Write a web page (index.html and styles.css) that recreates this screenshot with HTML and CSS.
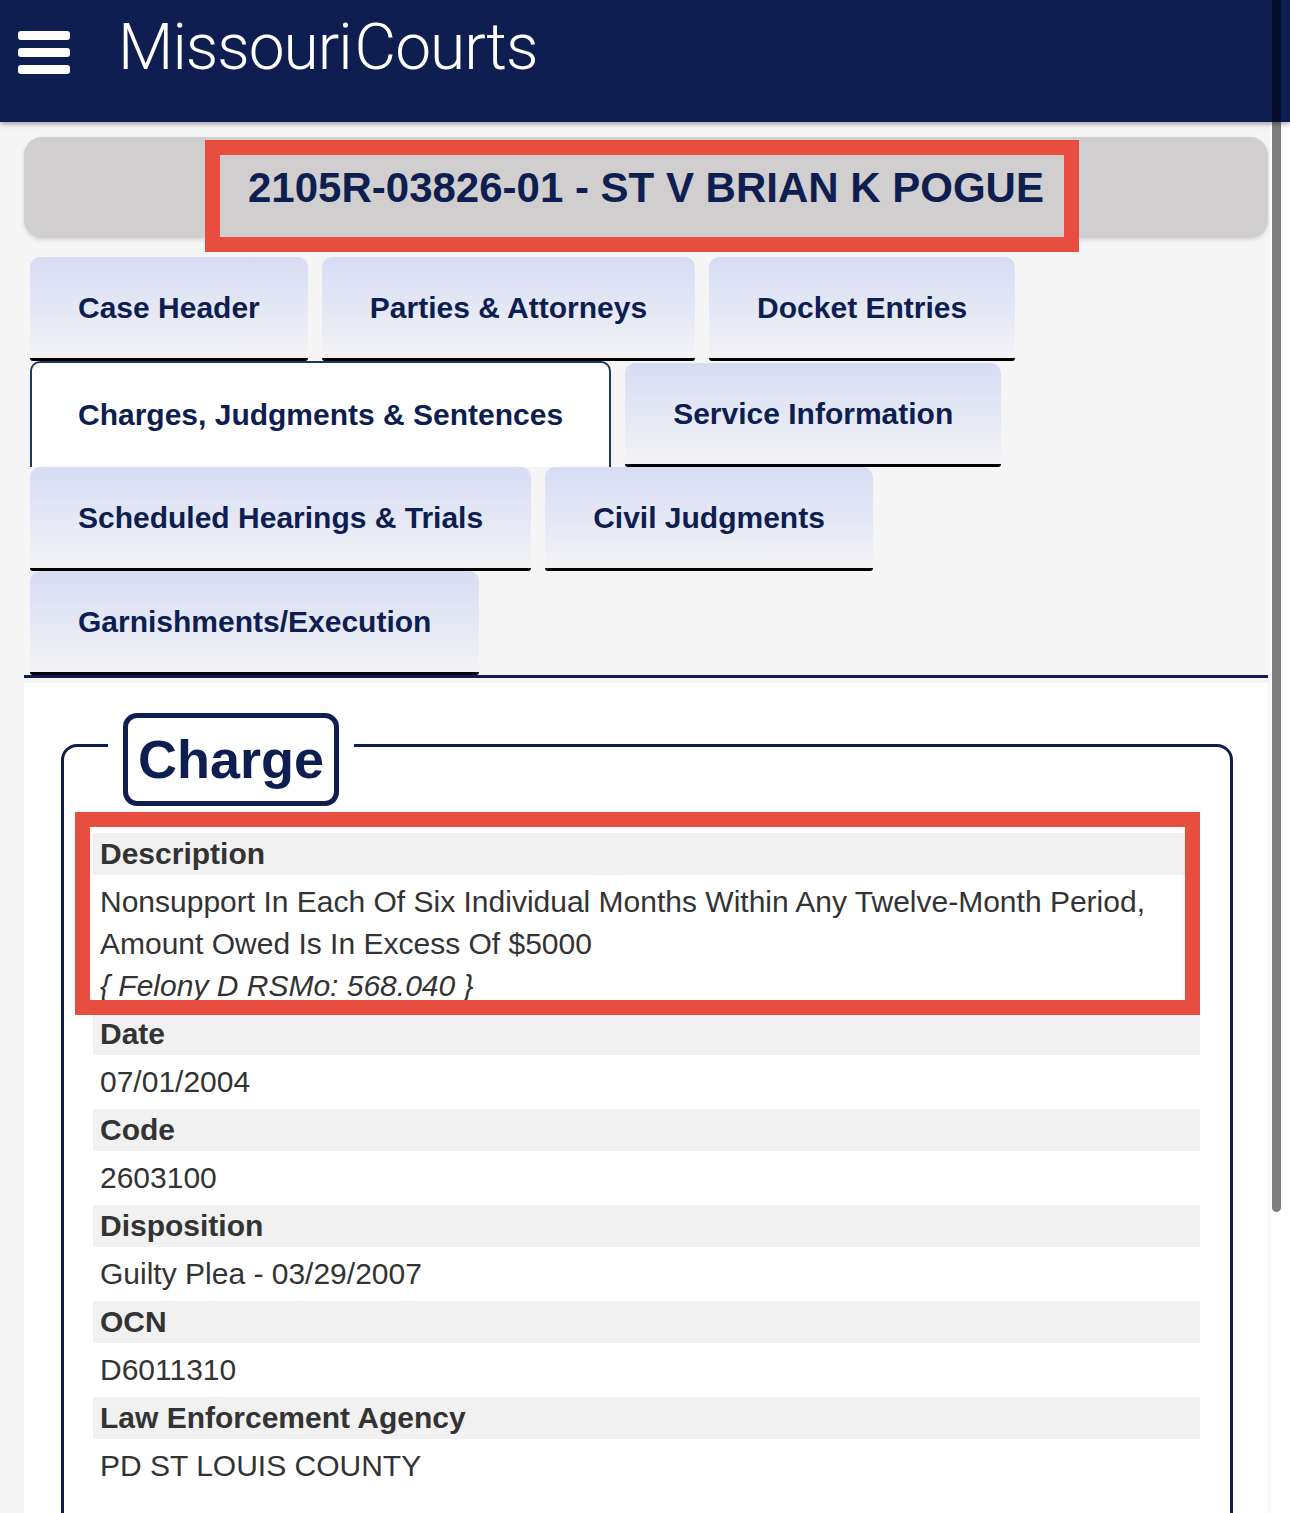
FILE: index.html
```html
<!DOCTYPE html>
<html lang="en">
<head>
  <meta charset="UTF-8" />
  <meta name="viewport" content="width=device-width, initial-scale=1" />
  <title>Case.net - Charges, Judgments &amp; Sentences</title>
  <link rel="stylesheet" href="styles.css">
</head>
<body>
  <header class="topbar">
    <svg class="menu-icon" width="52" height="43" viewBox="0 0 52 43" aria-hidden="true">
      <rect x="0" y="0" width="52" height="9" rx="3" fill="#fff" />
      <rect x="0" y="17" width="52" height="9" rx="3" fill="#fff" />
      <rect x="0" y="34" width="52" height="9" rx="3" fill="#fff" />
    </svg>
    <div class="brand">Missouri<span class="brand-gap"></span>Courts</div>
  </header>

  <div class="page">
    <div class="case-title">
      <h1>2105R-03826-01 - ST V BRIAN K POGUE</h1>
      <div class="mark mark-title"></div>
    </div>

    <nav class="tabs">
      <a class="tab" href="#">Case Header</a>
      <a class="tab" href="#">Parties &amp; Attorneys</a>
      <a class="tab" href="#">Docket Entries</a>
      <a class="tab active" href="#">Charges, Judgments &amp; Sentences</a>
      <a class="tab" href="#">Service Information</a>
      <a class="tab" href="#">Scheduled Hearings &amp; Trials</a>
      <a class="tab" href="#">Civil Judgments</a>
      <a class="tab" href="#">Garnishments/Execution</a>
    </nav>

    <div class="panel">
      <fieldset class="charge">
        <legend><span>Charge</span></legend>
        <dl class="rows">
          <div class="mark mark-desc"></div>
          <dt>Description</dt>
          <dd>Nonsupport In Each Of Six Individual Months Within Any Twelve-Month Period, Amount Owed Is In Excess Of $5000<br><em>{ Felony D RSMo: 568.040 }</em></dd>
          <dt>Date</dt>
          <dd>07/01/2004</dd>
          <dt>Code</dt>
          <dd>2603100</dd>
          <dt>Disposition</dt>
          <dd>Guilty Plea - 03/29/2007</dd>
          <dt>OCN</dt>
          <dd>D6011310</dd>
          <dt>Law Enforcement Agency</dt>
          <dd>PD ST LOUIS COUNTY</dd>
        </dl>
      </fieldset>
    </div>
  </div>

  <div class="scroll-thumb"></div>
</body>
</html>
```

FILE: styles.css
```css
body { margin: 0; background: #fff; font-family: "Liberation Sans", Arial, sans-serif; color: #333; }

/* top bar */
.topbar { display: flex; align-items: flex-start; height: 122px; padding-left: 18px; background: #0e1e50; box-shadow: 0 2px 5px rgba(0,0,0,.35); position: relative; z-index: 1; }
.menu-icon { margin-top: 31px; }
.brand { margin: 16px 0 0 48px; font: 300 64px/1 Roboto, "Liberation Sans", sans-serif; letter-spacing: -1px; color: #fff; }
.brand-gap { display: inline-block; width: 3px; }

.page { width: 1270px; box-sizing: border-box; padding: 15px 2px 0 24px; background: #f5f5f5; }

/* case title */
.case-title { position: relative; height: 101px; display: flex; align-items: center; justify-content: center; background: #d0cece; border-radius: 18px; box-shadow: 0 2px 4px rgba(0,0,0,.12); }
.case-title h1 { margin: 0; font-size: 42px; font-weight: bold; color: #0e1e50; }

.mark { position: absolute; border: 15px solid #e84e3f; box-sizing: border-box; pointer-events: none; }
.mark-title { left: 181px; top: 3px; width: 874px; height: 112px; }

/* tabs */
.tabs { display: flex; flex-wrap: wrap; align-items: flex-end; margin-top: 19px; padding-left: 6px; border-bottom: 3px solid #0e1e50; }
.tab { display: flex; align-items: center; height: 101px; padding: 0 48px; margin-right: 14px; background: linear-gradient(#d6dcf4, #f3f3f5); border-bottom: 3px solid #000; border-radius: 10px 10px 3px 3px; font-size: 30px; font-weight: bold; color: #0e1e50; text-decoration: none; white-space: nowrap; }
.tab.active { height: 104px; padding: 0 46px; background: #fff; border: 2px solid #1c3b5c; border-bottom: none; border-radius: 10px 10px 0 0; }

/* charge panel */
.panel { margin-top: 5px; padding: 2px 35px 0 37px; background: #fff; }
.charge { position: relative; margin: 0; padding: 27px 30px 60px 29px; border: 3px solid #0e1e50; border-radius: 16px; }
.charge legend { margin-left: 15px; padding: 28px 15px 0; }
.charge legend span { display: block; padding: 0 10px; border: 5px solid #0e1e50; border-radius: 14px; font-size: 54px; line-height: 83px; font-weight: bold; color: #0e1e50; }

.rows { position: relative; margin: 0; font-size: 30px; }
.rows dt { padding: 0 7px; line-height: 42px; background: #f1f1f1; font-weight: bold; }
.rows dd { margin: 0; padding: 6px 7px; line-height: 42px; }
.mark-desc { left: -18px; top: -21px; width: 1125px; height: 203px; z-index: 1; }

.scroll-thumb { position: absolute; top: 0; left: 1272px; width: 9px; height: 1212px; background: rgba(0,0,0,.5); border-radius: 0 0 5px 5px; z-index: 2; }
```
